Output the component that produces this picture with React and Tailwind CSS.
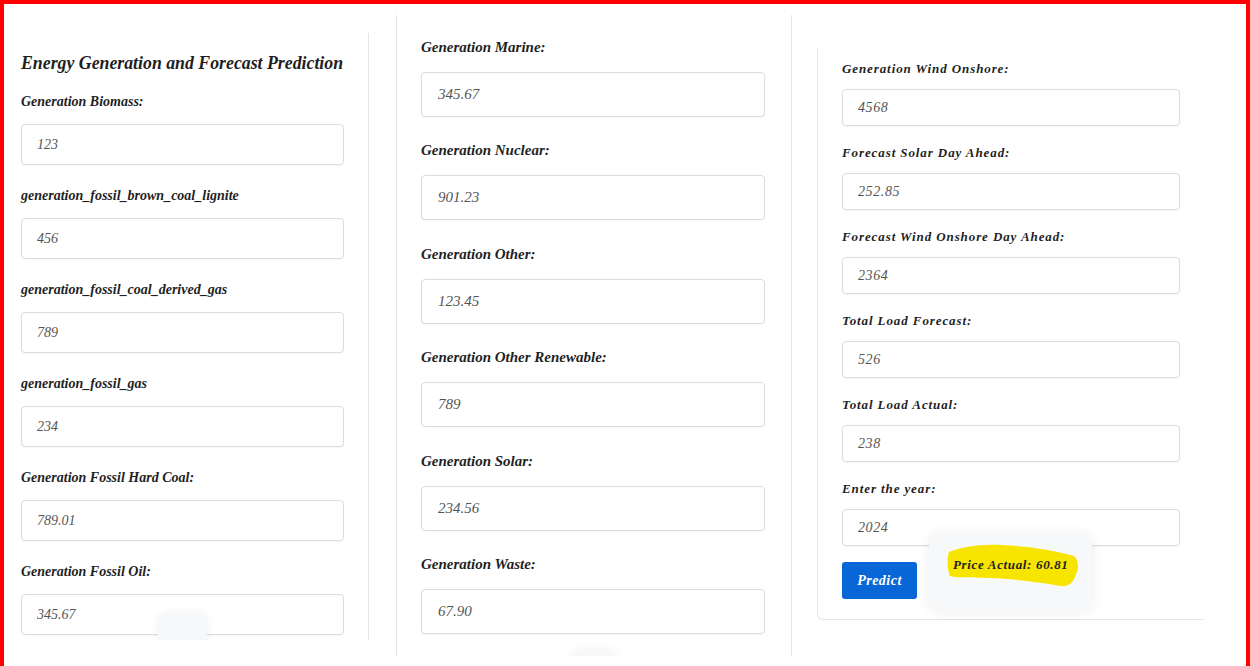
import React from 'react';

const serif = "font-['Liberation_Serif',serif]";

const leftFields = [
  ['Generation Biomass:', '123'],
  ['generation_fossil_brown_coal_lignite', '456'],
  ['generation_fossil_coal_derived_gas', '789'],
  ['generation_fossil_gas', '234'],
  ['Generation Fossil Hard Coal:', '789.01'],
  ['Generation Fossil Oil:', '345.67'],
];

const midFields = [
  ['Generation Marine:', '345.67'],
  ['Generation Nuclear:', '901.23'],
  ['Generation Other:', '123.45'],
  ['Generation Other Renewable:', '789'],
  ['Generation Solar:', '234.56'],
  ['Generation Waste:', '67.90'],
];

const rightFields = [
  ['Generation Wind Onshore:', '4568'],
  ['Forecast Solar Day Ahead:', '252.85'],
  ['Forecast Wind Onshore Day Ahead:', '2364'],
  ['Total Load Forecast:', '526'],
  ['Total Load Actual:', '238'],
  ['Enter the year:', '2024'],
];

function Field({ label, value, labelClass, inputClass }) {
  return (
    <div>
      <label className={`block font-bold italic text-[#1f1f1f] ${labelClass}`}>{label}</label>
      <input
        readOnly
        value={value}
        className={`block bg-white border border-[#dcdcdc] rounded-[4px] italic text-[#555] outline-none shadow-[0_1px_2px_rgba(0,0,0,0.04)] ${serif} ${inputClass}`}
      />
    </div>
  );
}

function GhostBox({ className }) {
  return <div className={`absolute bg-[#f7f8fa] rounded-lg shadow-[0_0_10px_rgba(0,0,0,0.06)] ${className}`} />;
}

export default function App() {
  return (
    <div className={`w-[1250px] h-[666px] bg-white border-t-4 border-l-4 border-r-4 border-[#ff0000] overflow-hidden flex items-start ${serif}`}>
      {/* left column */}
      <div className="relative w-[365px] h-[607px] mt-[29px] border-r border-[#e6e6e6] overflow-hidden pl-[17px] pt-[18px]">
        <h2 className="text-[17.8px] leading-6 font-bold italic text-[#1f1f1f] mb-[17px]">
          Energy Generation and Forecast Prediction
        </h2>
        <div className="flex flex-col gap-[21px]">
          {leftFields.map(([l, v]) => (
            <Field
              key={l}
              label={l}
              value={v}
              labelClass="text-[14px] leading-5 mb-[12px]"
              inputClass="w-[323px] h-[41px] pl-[15px] text-[14px]"
            />
          ))}
        </div>
        <GhostBox className="left-[154px] top-[580px] w-[49px] h-[40px]" />
      </div>

      {/* middle column */}
      <div className="relative w-[396px] h-[641px] mt-[11px] ml-[27px] border-x border-[#e6e6e6] overflow-hidden pl-6 pt-[22px]">
        <div className="flex flex-col gap-[23.4px]">
          {midFields.map(([l, v]) => (
            <Field
              key={l}
              label={l}
              value={v}
              labelClass="text-[15px] leading-5 mb-[15px]"
              inputClass="w-[344px] h-[45px] pl-[16px] text-[15px]"
            />
          ))}
        </div>
        <GhostBox className="left-[174px] top-[635px] w-[45px] h-[30px]" />
      </div>

      {/* right column */}
      <div className="w-[387px] mt-[44px] ml-[25px] border-l border-b border-[#e6e6e6] rounded-bl-md pl-6 pt-[12px] pb-[20px]">
        <div className="flex flex-col gap-[18px]">
          {rightFields.map(([l, v]) => (
            <Field
              key={l}
              label={l}
              value={v}
              labelClass="text-[13px] leading-[18px] tracking-[0.9px] mb-[11px]"
              inputClass="w-[338px] h-[37px] pl-[15px] text-[14px] tracking-[0.6px]"
            />
          ))}
        </div>
        <div className="relative mt-[16px] h-[37px]">
          <button className="w-[75px] h-[37px] bg-[#0866d6] rounded-[3px] text-white font-bold italic text-[14px] tracking-[0.5px]">
            Predict
          </button>
          <div className="absolute left-[87px] -top-[28px] w-[163px] h-[78px] bg-[#f7f8fa] rounded-[10px] shadow-[0_0_14px_rgba(0,0,0,0.07)]">
            <svg className="absolute inset-0" width="163" height="78" viewBox="0 0 163 78">
              <path
                d="M20 18 C 32 13, 52 10, 72 11 C 98 12, 124 16, 145 22 C 150 26, 150 36, 147 40 C 145 48, 140 53, 132 52 C 112 49, 90 45, 60 44 C 40 43, 25 44, 21 42 C 18 35, 18 24, 20 18 Z"
                fill="#f7e500"
              />
            </svg>
            <span className="absolute left-[24px] top-[22px] text-[13px] leading-[18px] font-bold italic text-[#1f1f1f] tracking-[0.65px] whitespace-nowrap">
              Price Actual: 60.81
            </span>
          </div>
        </div>
      </div>
    </div>
  );
}
